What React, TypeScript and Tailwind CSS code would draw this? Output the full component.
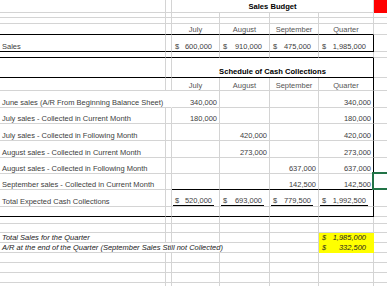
import type { ReactNode } from 'react';

type Edge = 'gray' | 'black' | 'none' | 'yellow' | 'red';

const bottomEdge: Record<Edge, string> = {
  gray: 'border-b-[#d4d4d4]',
  black: 'border-b-black',
  none: 'border-b-transparent',
  yellow: 'border-b-[#ffff00]',
  red: 'border-b-[#ff0000]',
};

const rightEdge: Record<Edge, string> = {
  gray: 'border-r-[#d4d4d4]',
  black: 'border-r-black',
  none: 'border-r-transparent',
  yellow: 'border-r-[#ffff00]',
  red: 'border-r-[#ff0000]',
};

const spans: Record<number, string> = { 1: '', 2: 'col-span-2', 3: 'col-span-3', 4: 'col-span-4' };

interface CellProps {
  span?: number;
  b?: Edge;
  r?: Edge;
  className?: string;
  children?: ReactNode;
}

const Cell = ({ span = 1, b = 'gray', r = 'gray', className = '', children }: CellProps) => (
  <div
    className={`relative flex min-w-0 items-end whitespace-nowrap border-b border-r leading-[9px] ${bottomEdge[b]} ${rightEdge[r]} ${spans[span]} ${className}`}
  >
    {children}
  </div>
);

// one spreadsheet row with nothing in it
const EmptyRow = ({ b = 'gray', rightF = 'gray' }: { b?: Edge; rightF?: Edge }) => (
  <>
    <Cell b={b} />
    <Cell b={b} />
    <Cell b={b} />
    <Cell b={b} />
    <Cell b={b} />
    <Cell b={b} r={rightF} />
    <Cell />
  </>
);

const Title = ({ children }: { children: ReactNode }) => (
  <span className="text-[7.6px] font-bold text-black">{children}</span>
);

const Label = ({ children, italic = false }: { children: ReactNode; italic?: boolean }) => (
  <span className={`pl-[2px] ${italic ? 'italic text-[#222]' : ''}`}>{children}</span>
);

const Money = ({ value, underline = false, italic = false }: { value: string; underline?: boolean; italic?: boolean }) => (
  <div className={`ml-px mr-[5px] flex flex-1 justify-between px-[2px] ${underline ? 'border-b border-black' : ''} ${italic ? 'italic' : ''}`}>
    <span>$</span>
    <span>{value}</span>
  </div>
);

const Num = ({ children }: { children: ReactNode }) => <span className="ml-auto pr-[2px]">{children}</span>;

const Header = ({ children }: { children: ReactNode }) => (
  <span className="mx-auto text-[#555]">{children}</span>
);

const months = ['July', 'August', 'September', 'Quarter'];

const collections: { label: string; values: [string, string, string, string] }[] = [
  { label: 'July sales - Collected in Current Month', values: ['180,000', '', '', '180,000'] },
  { label: 'July sales - Collected in Following Month', values: ['', '420,000', '', '420,000'] },
  { label: 'August sales - Collected in Current Month', values: ['', '273,000', '', '273,000'] },
  { label: 'August sales - Collected in Following Month', values: ['', '', '637,000', '637,000'] },
];

export default function App() {
  return (
    <div className="h-[286px] w-[387px] overflow-hidden bg-white font-['Liberation_Sans',Arial,sans-serif] text-[7.5px] text-[#404040]">
      <div className="grid w-[434px] grid-cols-[166px_6px_48px_50px_49px_55px_60px] grid-rows-[13px_5px_6px_11px_17px_6px_20px_13px_17px_16px_17px_17px_16px_16px_17px_10px_7px_9px_10px_10px_10px_10px_10px_10px]">
        {/* Sales budget */}
        <Cell />
        <Cell />
        <Cell span={4} className="justify-center pb-px">
          <Title>Sales Budget</Title>
        </Cell>
        <Cell b="red" r="red" className="bg-[#ff0000]" />

        <EmptyRow />
        <EmptyRow />

        <Cell b="black" />
        <Cell b="black" />
        {months.map((m) => (
          <Cell key={m} b="black">
            <Header>{m}</Header>
          </Cell>
        ))}
        <Cell />

        <Cell b="black">
          <Label>Sales</Label>
        </Cell>
        <Cell b="black" />
        <Cell b="black">
          <Money value="600,000" />
        </Cell>
        <Cell b="black">
          <Money value="910,000" />
        </Cell>
        <Cell b="black">
          <Money value="475,000" />
        </Cell>
        <Cell b="black" r="black">
          <Money value="1,985,000" />
        </Cell>
        <Cell />

        <EmptyRow b="black" />

        {/* Schedule of cash collections */}
        <Cell b="black" />
        <Cell b="black" />
        <Cell span={4} b="black" r="black" className="justify-center pb-px">
          <Title>Schedule of Cash Collections</Title>
        </Cell>
        <Cell />

        <Cell />
        <Cell />
        {months.map((m) => (
          <Cell key={m} r={m === 'Quarter' ? 'black' : 'gray'}>
            <Header>{m}</Header>
          </Cell>
        ))}
        <Cell />

        <Cell span={2} r="none">
          <Label>June sales (A/R From Beginning Balance Sheet)</Label>
        </Cell>
        <Cell>
          <Num>340,000</Num>
        </Cell>
        <Cell />
        <Cell />
        <Cell r="black">
          <Num>340,000</Num>
        </Cell>
        <Cell />

        {collections.map((row) => (
          <div key={row.label} className="contents">
            <Cell>
              <Label>{row.label}</Label>
            </Cell>
            <Cell />
            {row.values.map((v, i) => (
              <Cell key={i} r={i === 3 ? 'black' : 'gray'}>
                {v && <Num>{v}</Num>}
              </Cell>
            ))}
            <Cell />
          </div>
        ))}

        <Cell>
          <Label>September sales - Collected in Current Month</Label>
        </Cell>
        <Cell />
        <Cell b="black" />
        <Cell b="black" />
        <Cell b="black">
          <Num>142,500</Num>
        </Cell>
        <Cell b="black" r="black">
          <Num>142,500</Num>
        </Cell>
        <Cell>
          <div className="absolute -bottom-px -left-[2px] -top-[2px] right-0 border-2 border-[#217346]" />
        </Cell>

        <Cell>
          <Label>Total Expected Cash Collections</Label>
        </Cell>
        <Cell />
        <Cell>
          <Money value="520,000" underline />
        </Cell>
        <Cell>
          <Money value="693,000" underline />
        </Cell>
        <Cell>
          <Money value="779,500" underline />
        </Cell>
        <Cell r="black">
          <Money value="1,992,500" underline />
        </Cell>
        <Cell />

        <EmptyRow b="black" rightF="black" />
        <EmptyRow />
        <EmptyRow />

        {/* Quarter summary */}
        <Cell>
          <Label italic>Total Sales for the Quarter</Label>
        </Cell>
        <Cell />
        <Cell />
        <Cell />
        <Cell />
        <Cell b="yellow" r="yellow" className="bg-[#ffff00] text-[#222]">
          <Money value="1,985,000" italic />
        </Cell>
        <Cell />

        <Cell span={4}>
          <Label italic>A/R at the end of the Quarter (September Sales Still not Collected)</Label>
        </Cell>
        <Cell />
        <Cell b="yellow" r="yellow" className="bg-[#ffff00] text-[#222]">
          <Money value="332,500" italic />
        </Cell>
        <Cell />

        <EmptyRow />
        <EmptyRow />
        <EmptyRow />
        <EmptyRow />
      </div>
    </div>
  );
}
